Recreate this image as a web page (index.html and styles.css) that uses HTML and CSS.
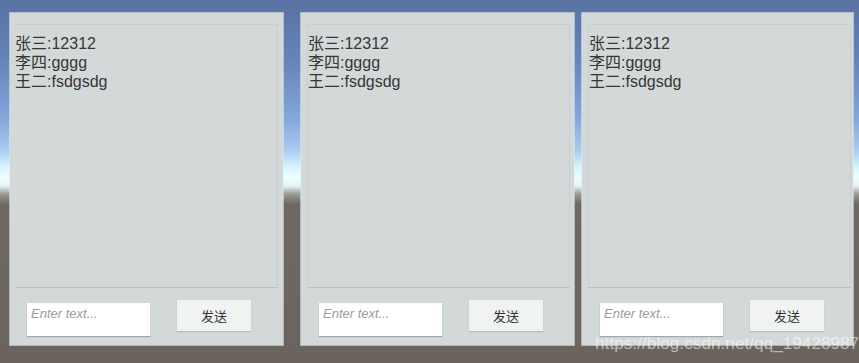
FILE: index.html
```html
<!DOCTYPE html>
<html lang="zh">
<head>
<meta charset="utf-8">
<link rel="stylesheet" href="styles.css">
</head>
<body>
<div class="stage">
  <div class="panel p1">
    <div class="chat">
      <div class="msg">张三:12312</div>
      <div class="msg">李四:gggg</div>
      <div class="msg">王二:fsdgsdg</div>
    </div>
    <div class="footer">
      <div class="input"><span class="ph">Enter text...</span></div>
      <div class="btn">发送</div>
    </div>
  </div>
  <div class="panel p2">
    <div class="chat">
      <div class="msg">张三:12312</div>
      <div class="msg">李四:gggg</div>
      <div class="msg">王二:fsdgsdg</div>
    </div>
    <div class="footer">
      <div class="input"><span class="ph">Enter text...</span></div>
      <div class="btn">发送</div>
    </div>
  </div>
  <div class="panel p3">
    <div class="chat">
      <div class="msg">张三:12312</div>
      <div class="msg">李四:gggg</div>
      <div class="msg">王二:fsdgsdg</div>
    </div>
    <div class="footer">
      <div class="input"><span class="ph">Enter text...</span></div>
      <div class="btn">发送</div>
    </div>
  </div>
</div>
<div class="watermark">https://blog.csdn.net/qq_19428987</div>
</body>
</html>
```
FILE: styles.css
```css
html, body {
  margin: 0;
  padding: 0;
}
body {
  width: 859px;
  height: 363px;
  overflow: hidden;
  position: relative;
  font-family: "Liberation Sans", "Noto Sans CJK SC", sans-serif;
  background: linear-gradient(to bottom,
    #5a72a4 0px,
    #6584b8 60px,
    #85a8dc 120px,
    #a9cbf0 150px,
    #d8f6ff 168px,
    #eefeff 178px,
    #e4f2f2 186px,
    #9a9a96 194px,
    #6f6862 204px,
    #6a635e 363px);
}
.stage {
  display: flex;
  padding: 13px 0 0 10px;
}
.panel {
  height: 332px;
  background: #d3d9d8;
  box-sizing: border-box;
  padding: 11px 0 0 5px;
  box-shadow: 0 0 0 1px rgba(230,236,236,0.6);
}
.p1 { width: 273px; margin-right: 18px; }
.p2 { width: 273px; margin-right: 8px; padding-left: 6px; }
.p3 { width: 271px; padding-left: 6px; }
.chat {
  width: 263px;
  height: 264px;
  box-sizing: border-box;
  border-top: 1px solid #c9cfce;
  border-bottom: 1px solid #b9c0c0;
  border-right: 1px solid #c9cfce;
  padding-top: 9px;
  color: #363636;
  font-size: 16px;
  line-height: 19px;
}
.p2 .chat, .p3 .chat {
  border-left: 1px solid #c9cfce;
}
.msg {
  white-space: nowrap;
}
.footer {
  display: flex;
  align-items: flex-start;
  padding-left: 12px;
}
.input {
  width: 123px;
  height: 33px;
  margin-top: 15px;
  background: #ffffff;
  box-sizing: border-box;
  box-shadow: 0 1px 1px rgba(120,128,128,0.55);
  padding: 1px 0 0 4px;
}
.ph {
  font-style: italic;
  font-size: 13px;
  color: #9a9c9c;
}
.btn {
  width: 74px;
  height: 31px;
  margin-top: 12px;
  margin-left: 27px;
  background: #f1f3f3;
  box-shadow: 0 1px 1px rgba(150,158,158,0.5);
  color: #333333;
  font-size: 13px;
  display: flex;
  align-items: center;
  justify-content: center;
}
.watermark {
  position: absolute;
  left: 595px;
  top: 334px;
  font-size: 17px;
  color: rgba(255,255,255,0.55);
  white-space: nowrap;
  letter-spacing: 0.1px;
}
```
